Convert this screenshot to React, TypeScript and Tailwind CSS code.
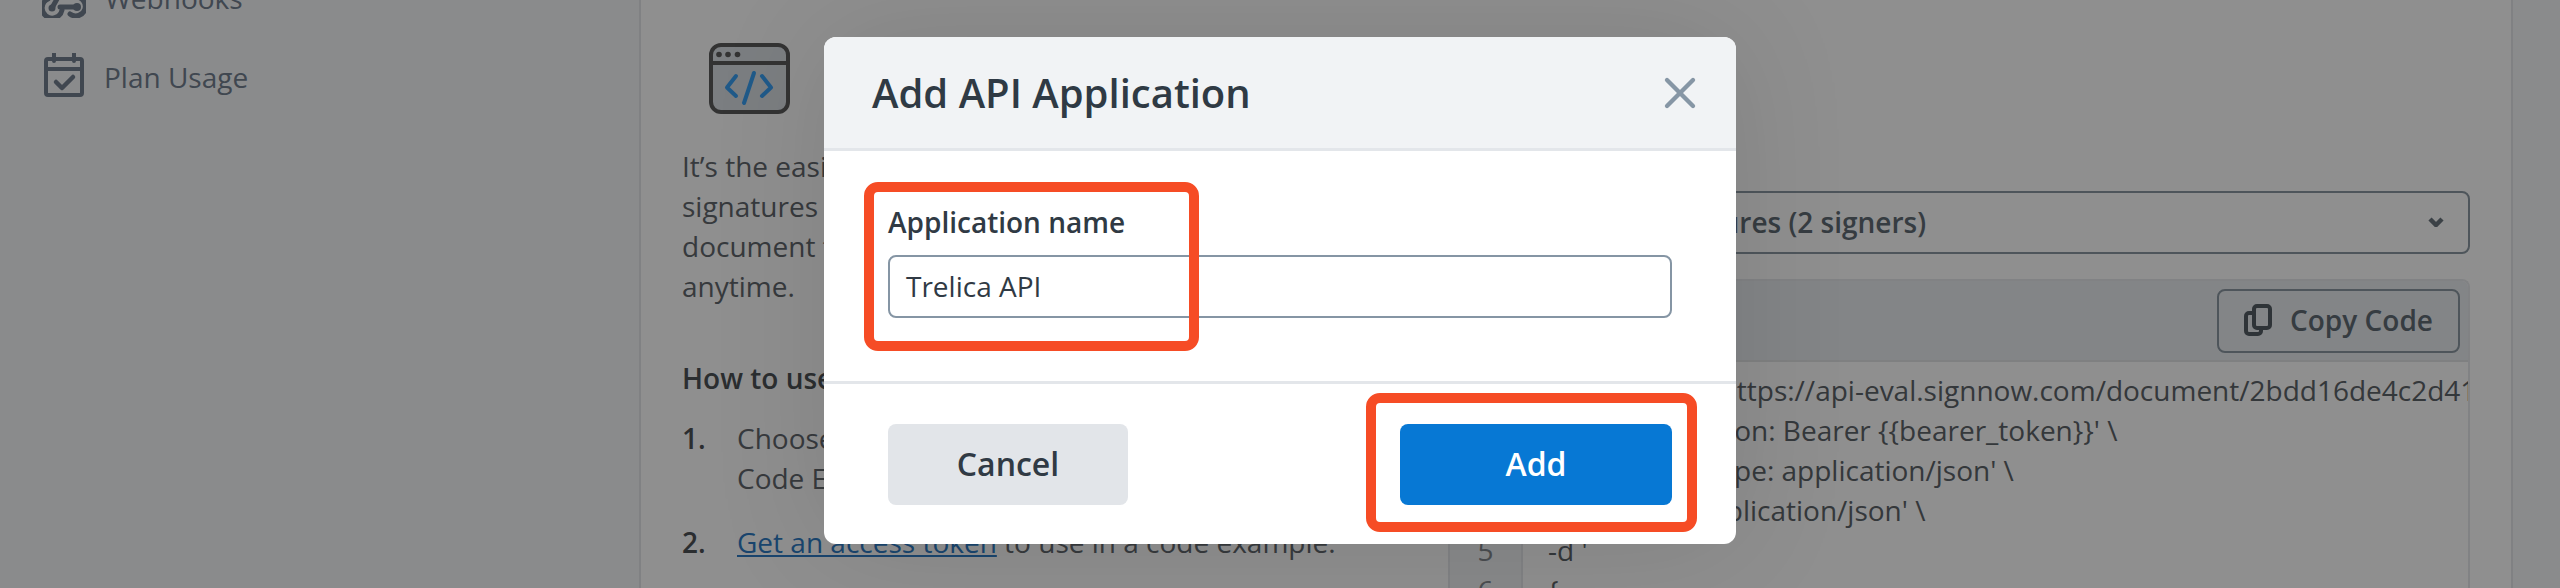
import { X } from "lucide-react";

const codeLines = [
  "curl -X POST 'https://api-eval.signnow.com/document/2bdd16de4c2d41a6f0c8e7b5d93ac1e4720f68bd/invite'",
  "-H 'Authorization: Bearer {{bearer_token}}' \\",
  "-H 'Content-Type: application/json' \\",
  "-H 'Accept: application/json' \\",
  "-d '",
  "{",
];

function WebhookIcon() {
  return (
    <svg width="44" height="62" viewBox="0 0 44 62" fill="none" stroke="#727f8f" strokeWidth="5" strokeLinecap="round">
      <circle cx="10" cy="52" r="3.5" fill="#727f8f" stroke="none" />
      <path d="M6 43 A10 10 0 1 0 20 54" />
      <path d="M18 51 H35" />
      <circle cx="35" cy="51" r="4" fill="#727f8f" stroke="none" />
      <path d="M28 58 A9.5 9.5 0 1 0 33 41" />
      <path d="M10 52 L20 34" />
    </svg>
  );
}

function CalendarIcon() {
  return (
    <svg width="40" height="44" viewBox="0 0 40 44" fill="none" stroke="#727f8f" strokeWidth="4">
      <rect x="2" y="6" width="36" height="36" rx="2" />
      <path d="M2 16 H38" />
      <path d="M10 0 V8 M30 0 V8" strokeLinecap="round" />
      <path d="M12 29 L18 35 L29 24" strokeWidth="4.5" strokeLinecap="round" strokeLinejoin="round" />
    </svg>
  );
}

function CodeWindowIcon() {
  return (
    <svg width="81" height="71" viewBox="0 0 81 71" fill="none">
      <rect x="2" y="2" width="77" height="67" rx="10" fill="#dbe0e6" stroke="#5c5c5c" strokeWidth="4" />
      <path d="M2 20 H79" stroke="#5c5c5c" strokeWidth="4" />
      <circle cx="10" cy="11.5" r="2.8" fill="#5c5c5c" />
      <circle cx="19" cy="11.5" r="2.8" fill="#5c5c5c" />
      <circle cx="28.5" cy="11.5" r="2.8" fill="#5c5c5c" />
      <g stroke="#3aa0f5" strokeWidth="4" strokeLinecap="round" strokeLinejoin="round">
        <path d="M27 33 L18 44.5 L27 53" />
        <path d="M53 33 L62 44.5 L53 53" />
        <path d="M45 30 L35 60" />
      </g>
    </svg>
  );
}

function CopyIcon() {
  return (
    <svg width="28" height="32" viewBox="0 0 28 32" fill="none" stroke="#545d64" strokeWidth="4">
      <rect x="10" y="2" width="16" height="22" rx="3" />
      <path d="M8 9 H5 A3 3 0 0 0 2 12 V27 A3 3 0 0 0 5 30 H14 A3 3 0 0 0 17 27 V26" />
    </svg>
  );
}

export default function App() {
  return (
    <div className="relative flex h-[588px] w-[2560px] overflow-hidden bg-white font-['Open_Sans',sans-serif]">

      {/* Sidebar */}
      <aside className="flex w-[641px] shrink-0 flex-col border-r-2 border-[#e4e6e9] bg-[#f7f8fa] pl-[42px] -mt-[44px] text-[28px] leading-[40px] text-[#727f8f]">
        <div className="flex h-[62px] items-end gap-[19px]">
          <WebhookIcon />
          <span>Webhooks</span>
        </div>
        <div className="mt-[35px] flex h-[44px] items-center gap-[20px] pl-[2px]">
          <CalendarIcon />
          <span className="mt-[4px]">Plan Usage</span>
        </div>
      </aside>

      {/* Main panel */}
      <main className="flex flex-1 gap-[42px] pl-[41px] pr-[41px]">
        <div className="w-[724px] shrink-0 pt-[43px] text-[28px] leading-[40px] text-[#62686e]">
          <div className="pl-[27px]">
            <CodeWindowIcon />
          </div>
          <p className="mt-[32px] whitespace-nowrap">
            It’s the easiest way to add legally binding e-<br />
            signatures to your product. Send a test<br />
            document to yourself and check the result<br />
            anytime.
          </p>
          <h3 className="mt-[52px] font-semibold text-[#4e5257]">How to use the API</h3>
          <ol className="mt-[20px] flex flex-col gap-[24px]">
            <li className="flex">
              <span className="w-[55px] shrink-0 font-semibold text-[#4e5257]">1.</span>
              <span>Choose a use case from the list on the right<br />Code Example panel.</span>
            </li>
            <li className="flex">
              <span className="w-[55px] shrink-0 font-semibold text-[#4e5257]">2.</span>
              <span>
                <a className="text-[#2f7cc4] underline">Get an access token</a> to use in a code example.
              </span>
            </li>
          </ol>
        </div>

        <div className="w-[1022px] shrink-0 pt-[191px]">
          <div className="flex h-[63px] items-center justify-between rounded-lg border-2 border-[#8b98a2] pb-[2px] pl-[47px] pr-[24px] text-[28px] font-semibold text-[#606b75]">
            <span>Request e-signatures (2 signers)</span>
            <svg width="16" height="10" viewBox="0 0 16 10" fill="none" stroke="#6a747e" strokeWidth="4.5">
              <path d="M2 2 L8 8 L14 2" />
            </svg>
          </div>

          <div className="mt-[25px] overflow-hidden rounded-t-lg border-2 border-b-0 border-[#e6e8eb]">
            <div className="flex h-[81px] items-center justify-end border-b-2 border-[#e2e4e7] bg-[#eaedf1] pr-[8px]">
              <button className="flex h-[64px] w-[243px] items-center justify-center gap-[18px] rounded-lg border-2 border-[#8b98a2] pb-[2px] text-[28px] font-semibold text-[#606b75]">
                <CopyIcon />
                Copy Code
              </button>
            </div>
            <div className="flex text-[28px] leading-[40px] text-[#5e646a]">
              <div className="w-[73px] shrink-0 border-r-2 border-[#e6e8eb] bg-[#f3f4f6] pt-[8px] text-center text-[#858a8f]">
                {codeLines.map((_, i) => (
                  <div key={i}>{i + 1}</div>
                ))}
              </div>
              <div className="min-w-0 flex-1 overflow-hidden whitespace-nowrap pl-[25px] pt-[8px]">
                {codeLines.map((line, i) => (
                  <div key={i}>{line}</div>
                ))}
              </div>
            </div>
          </div>
        </div>
      </main>

      <div className="w-[49px] shrink-0 border-l-2 border-[#e4e6e9] bg-[#f7f8fa]" />

      {/* Dimmed backdrop */}
      <div className="absolute inset-0 bg-black/[0.44]" />

      {/* Modal */}
      <div className="absolute left-[824px] top-[37px] flex h-[507px] w-[912px] flex-col overflow-hidden rounded-xl bg-white shadow-[0_0_120px_rgba(0,0,0,0.1)]">
        <div className="flex h-[114px] shrink-0 items-center justify-between border-b-[3px] border-[#e3e6ea] bg-[#f1f3f5] pl-[48px] pr-[41px]">
          <h2 className="text-[40px] font-semibold text-[#2f3a44]">Add API Application</h2>
          <X className="-mr-[11px] h-[52px] w-[52px] text-[#8696a5]" strokeWidth={2} />
        </div>
        <div className="flex h-[233px] shrink-0 flex-col border-b-[3px] border-[#e3e6ea] px-[64px] pt-[51px]">
          <label className="text-[28px] font-semibold leading-[40px] text-[#303a44]">Application name</label>
          <div className="mt-[13px] flex h-[63px] items-center rounded-lg border-2 border-[#8595a4] px-[16px] pb-[2px] text-[28px] text-[#303a44]">
            Trelica API
          </div>
        </div>
        <div className="flex flex-1 items-start justify-between px-[64px] pt-[40px]">
          <button className="h-[81px] w-[240px] rounded-lg bg-[#e2e5e9] pb-[2px] text-[32px] font-semibold text-[#303a44]">Cancel</button>
          <button className="h-[81px] w-[272px] rounded-lg bg-[#0778d4] pb-[2px] text-[32px] font-semibold text-white">Add</button>
        </div>
      </div>

      {/* Red annotation boxes */}
      <div className="absolute left-[864px] top-[182px] h-[169px] w-[335px] rounded-[14px] border-[10px] border-[#f64c25]" />
      <div className="absolute left-[1366px] top-[393px] h-[139px] w-[331px] rounded-[14px] border-[10px] border-[#f64c25]" />
    </div>
  );
}
